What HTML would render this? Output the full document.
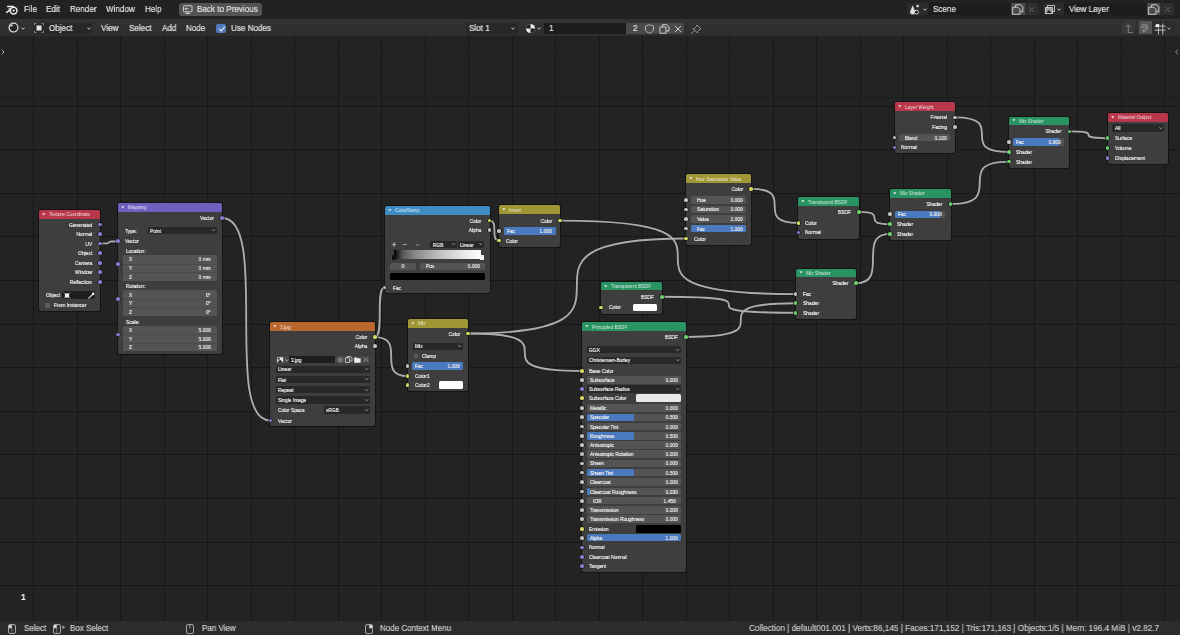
<!DOCTYPE html>
<html><head><meta charset="utf-8"><style>
html,body{margin:0;padding:0;}
body{width:1180px;height:635px;overflow:hidden;position:relative;background:#232323;font-family:"Liberation Sans", sans-serif;}
.t{position:absolute;white-space:nowrap;line-height:8px;height:8px;will-change:transform;-webkit-text-stroke:0.2px currentColor;}
.r{position:absolute;}
.s{position:absolute;border-radius:50%;box-shadow:0 0 0 0.6px #111;}
svg{overflow:visible}
</style></head><body>
<svg class="r" style="left:0;top:0" width="1180" height="635"><rect x="33" y="0" width="1" height="635" fill="#171717"/><rect x="77" y="0" width="1" height="635" fill="#171717"/><rect x="120" y="0" width="1" height="635" fill="#171717"/><rect x="164" y="0" width="1" height="635" fill="#171717"/><rect x="207" y="0" width="1" height="635" fill="#171717"/><rect x="251" y="0" width="1" height="635" fill="#171717"/><rect x="294" y="0" width="1" height="635" fill="#171717"/><rect x="338" y="0" width="1" height="635" fill="#171717"/><rect x="381" y="0" width="1" height="635" fill="#171717"/><rect x="425" y="0" width="1" height="635" fill="#171717"/><rect x="468" y="0" width="1" height="635" fill="#171717"/><rect x="512" y="0" width="1" height="635" fill="#171717"/><rect x="555" y="0" width="1" height="635" fill="#171717"/><rect x="599" y="0" width="1" height="635" fill="#171717"/><rect x="642" y="0" width="1" height="635" fill="#171717"/><rect x="686" y="0" width="1" height="635" fill="#171717"/><rect x="729" y="0" width="1" height="635" fill="#171717"/><rect x="773" y="0" width="1" height="635" fill="#171717"/><rect x="816" y="0" width="1" height="635" fill="#171717"/><rect x="860" y="0" width="1" height="635" fill="#171717"/><rect x="903" y="0" width="1" height="635" fill="#171717"/><rect x="947" y="0" width="1" height="635" fill="#171717"/><rect x="990" y="0" width="1" height="635" fill="#171717"/><rect x="1034" y="0" width="1" height="635" fill="#171717"/><rect x="1077" y="0" width="1" height="635" fill="#171717"/><rect x="1121" y="0" width="1" height="635" fill="#171717"/><rect x="1164" y="0" width="1" height="635" fill="#171717"/><rect x="0" y="106" width="1180" height="1" fill="#171717"/><rect x="0" y="149" width="1180" height="1" fill="#171717"/><rect x="0" y="193" width="1180" height="1" fill="#171717"/><rect x="0" y="236" width="1180" height="1" fill="#171717"/><rect x="0" y="280" width="1180" height="1" fill="#171717"/><rect x="0" y="324" width="1180" height="1" fill="#171717"/><rect x="0" y="367" width="1180" height="1" fill="#171717"/><rect x="0" y="411" width="1180" height="1" fill="#171717"/><rect x="0" y="454" width="1180" height="1" fill="#171717"/><rect x="0" y="498" width="1180" height="1" fill="#171717"/><rect x="0" y="542" width="1180" height="1" fill="#171717"/><rect x="0" y="585" width="1180" height="1" fill="#171717"/><rect x="0" y="629" width="1180" height="1" fill="#171717"/><rect x="0" y="53" width="1180" height="1" fill="#1e1e1e"/><rect x="0" y="97" width="1180" height="1" fill="#1c1c1c"/></svg>
<svg class="r" style="left:0;top:0" width="1180" height="635"><path d="M100.00 243.50 C118.00 243.50 100.00 241.20 118.00 241.20" stroke="#151515" stroke-width="2.8" fill="none" stroke-opacity="0.7"/><path d="M222.00 218.00 C270.40 218.00 222.00 420.50 270.40 420.50" stroke="#151515" stroke-width="2.8" fill="none" stroke-opacity="0.7"/><path d="M374.90 337.10 C384.60 337.10 374.90 287.50 384.60 287.50" stroke="#151515" stroke-width="2.8" fill="none" stroke-opacity="0.7"/><path d="M374.90 337.10 C407.50 337.10 374.90 376.00 407.50 376.00" stroke="#151515" stroke-width="2.8" fill="none" stroke-opacity="0.7"/><path d="M489.60 220.60 C499.20 220.60 489.60 240.60 499.20 240.60" stroke="#151515" stroke-width="2.8" fill="none" stroke-opacity="0.7"/><path d="M560.00 220.60 C795.60 220.60 560.00 294.10 795.60 294.10" stroke="#151515" stroke-width="2.8" fill="none" stroke-opacity="0.7"/><path d="M467.80 333.50 C685.90 333.50 467.80 238.50 685.90 238.50" stroke="#151515" stroke-width="2.8" fill="none" stroke-opacity="0.7"/><path d="M467.80 333.50 C581.80 333.50 467.80 371.00 581.80 371.00" stroke="#151515" stroke-width="2.8" fill="none" stroke-opacity="0.7"/><path d="M751.00 188.90 C798.40 188.90 751.00 223.00 798.40 223.00" stroke="#151515" stroke-width="2.8" fill="none" stroke-opacity="0.7"/><path d="M858.90 211.90 C890.00 211.90 858.90 224.20 890.00 224.20" stroke="#151515" stroke-width="2.8" fill="none" stroke-opacity="0.7"/><path d="M856.00 283.20 C890.00 283.20 856.00 233.90 890.00 233.90" stroke="#151515" stroke-width="2.8" fill="none" stroke-opacity="0.7"/><path d="M950.60 203.90 C1008.90 203.90 950.60 161.60 1008.90 161.60" stroke="#151515" stroke-width="2.8" fill="none" stroke-opacity="0.7"/><path d="M955.00 117.40 C1008.90 117.40 955.00 152.00 1008.90 152.00" stroke="#151515" stroke-width="2.8" fill="none" stroke-opacity="0.7"/><path d="M1069.40 131.40 C1107.60 131.40 1069.40 138.20 1107.60 138.20" stroke="#151515" stroke-width="2.8" fill="none" stroke-opacity="0.7"/><path d="M662.00 296.80 C795.60 296.80 662.00 312.80 795.60 312.80" stroke="#151515" stroke-width="2.8" fill="none" stroke-opacity="0.7"/><path d="M686.00 337.00 C795.60 337.00 686.00 303.30 795.60 303.30" stroke="#151515" stroke-width="2.8" fill="none" stroke-opacity="0.7"/><path d="M100.00 243.50 C118.00 243.50 100.00 241.20 118.00 241.20" stroke="#acacac" stroke-width="1.9" fill="none"/><path d="M222.00 218.00 C270.40 218.00 222.00 420.50 270.40 420.50" stroke="#acacac" stroke-width="1.9" fill="none"/><path d="M374.90 337.10 C384.60 337.10 374.90 287.50 384.60 287.50" stroke="#acacac" stroke-width="1.9" fill="none"/><path d="M374.90 337.10 C407.50 337.10 374.90 376.00 407.50 376.00" stroke="#acacac" stroke-width="1.9" fill="none"/><path d="M489.60 220.60 C499.20 220.60 489.60 240.60 499.20 240.60" stroke="#acacac" stroke-width="1.9" fill="none"/><path d="M560.00 220.60 C795.60 220.60 560.00 294.10 795.60 294.10" stroke="#acacac" stroke-width="1.9" fill="none"/><path d="M467.80 333.50 C685.90 333.50 467.80 238.50 685.90 238.50" stroke="#acacac" stroke-width="1.9" fill="none"/><path d="M467.80 333.50 C581.80 333.50 467.80 371.00 581.80 371.00" stroke="#acacac" stroke-width="1.9" fill="none"/><path d="M751.00 188.90 C798.40 188.90 751.00 223.00 798.40 223.00" stroke="#acacac" stroke-width="1.9" fill="none"/><path d="M858.90 211.90 C890.00 211.90 858.90 224.20 890.00 224.20" stroke="#acacac" stroke-width="1.9" fill="none"/><path d="M856.00 283.20 C890.00 283.20 856.00 233.90 890.00 233.90" stroke="#acacac" stroke-width="1.9" fill="none"/><path d="M950.60 203.90 C1008.90 203.90 950.60 161.60 1008.90 161.60" stroke="#acacac" stroke-width="1.9" fill="none"/><path d="M955.00 117.40 C1008.90 117.40 955.00 152.00 1008.90 152.00" stroke="#acacac" stroke-width="1.9" fill="none"/><path d="M1069.40 131.40 C1107.60 131.40 1069.40 138.20 1107.60 138.20" stroke="#acacac" stroke-width="1.9" fill="none"/><path d="M662.00 296.80 C795.60 296.80 662.00 312.80 795.60 312.80" stroke="#acacac" stroke-width="1.9" fill="none"/><path d="M686.00 337.00 C795.60 337.00 686.00 303.30 795.60 303.30" stroke="#acacac" stroke-width="1.9" fill="none"/></svg>
<div class="r" style="left:38.00px;top:208.50px;width:63.00px;height:103.50px;background:#141414;border-radius:2.8px;opacity:0.95"></div><div class="r" style="left:39.00px;top:209.50px;width:61.00px;height:101.50px;background:#3e3e3e;border-radius:2px;"></div><div class="r" style="left:39.00px;top:209.50px;width:61.00px;height:9.00px;background:#b9374b;border-radius:2px;border-bottom-left-radius:0;border-bottom-right-radius:0"></div><svg class="r" style="left:42.00px;top:212.50px" width="4" height="3"><path d="M0.3 0.3 L3.3 0.3 L1.8 2.6Z" fill="#e8e8e8"/></svg><div class="t" style="left:49.00px;top:210.00px;font-size:5.90px;color:rgba(255,255,255,0.82);transform:scaleX(0.8220);transform-origin:0 50%;-webkit-text-stroke:0;">Texture Coordinate</div><div class="t" style="right:1087.80px;top:220.60px;font-size:6.02px;color:#eeeeee;text-align:right;transform:scaleX(0.8220);transform-origin:100% 50%;">Generated</div><div class="s" style="left:98.15px;top:222.75px;width:3.70px;height:3.70px;background:#857ed0;"></div><div class="t" style="right:1087.80px;top:230.00px;font-size:6.02px;color:#eeeeee;text-align:right;transform:scaleX(0.8220);transform-origin:100% 50%;">Normal</div><div class="s" style="left:98.15px;top:232.15px;width:3.70px;height:3.70px;background:#857ed0;"></div><div class="t" style="right:1087.80px;top:239.50px;font-size:6.02px;color:#eeeeee;text-align:right;transform:scaleX(0.8220);transform-origin:100% 50%;">UV</div><div class="s" style="left:98.15px;top:241.65px;width:3.70px;height:3.70px;background:#857ed0;"></div><div class="t" style="right:1087.80px;top:249.30px;font-size:6.02px;color:#eeeeee;text-align:right;transform:scaleX(0.8220);transform-origin:100% 50%;">Object</div><div class="s" style="left:98.15px;top:251.45px;width:3.70px;height:3.70px;background:#857ed0;"></div><div class="t" style="right:1087.80px;top:258.80px;font-size:6.02px;color:#eeeeee;text-align:right;transform:scaleX(0.8220);transform-origin:100% 50%;">Camera</div><div class="s" style="left:98.15px;top:260.95px;width:3.70px;height:3.70px;background:#857ed0;"></div><div class="t" style="right:1087.80px;top:268.20px;font-size:6.02px;color:#eeeeee;text-align:right;transform:scaleX(0.8220);transform-origin:100% 50%;">Window</div><div class="s" style="left:98.15px;top:270.35px;width:3.70px;height:3.70px;background:#857ed0;"></div><div class="t" style="right:1087.80px;top:277.90px;font-size:6.02px;color:#eeeeee;text-align:right;transform:scaleX(0.8220);transform-origin:100% 50%;">Reflection</div><div class="s" style="left:98.15px;top:280.05px;width:3.70px;height:3.70px;background:#857ed0;"></div><div class="t" style="left:46.00px;top:290.60px;font-size:5.90px;color:#eeeeee;transform:scaleX(0.8220);transform-origin:0 50%;">Object</div><div class="r" style="left:62.00px;top:291.00px;width:32.70px;height:7.60px;background:#1e1e1e;border-radius:2px;"></div><svg class="r" style="left:62.5px;top:291.5px" width="8" height="7" viewBox="0 0 8 7"><rect x="1.9" y="1.4" width="4.2" height="4.2" fill="#f2f2f2"/><path d="M0.6 0.6 L1.9 1.6 M7.4 0.6 L6.1 1.6 M0.6 6.4 L1.9 5.4 M7.4 6.4 L6.1 5.4" stroke="#bdbdbd" stroke-width="0.6"/></svg><svg class="r" style="left:87.8px;top:291.6px" width="7" height="7" viewBox="0 0 7 7"><path d="M0.8 6.2 L4.2 2.8" stroke="#e6e6e6" stroke-width="1.1" stroke-linecap="round"/><circle cx="5.1" cy="1.9" r="1.3" fill="#f0f0f0"/></svg><div class="r" style="left:45.00px;top:303.00px;width:5.20px;height:4.80px;background:#5f5f5f;border-radius:0.8px;"></div><div class="t" style="left:53.70px;top:301.30px;font-size:5.90px;color:#eeeeee;transform:scaleX(0.8220);transform-origin:0 50%;">From Instancer</div><div class="r" style="left:117.00px;top:202.00px;width:106.00px;height:153.00px;background:#141414;border-radius:2.8px;opacity:0.95"></div><div class="r" style="left:118.00px;top:203.00px;width:104.00px;height:151.00px;background:#3e3e3e;border-radius:2px;"></div><div class="r" style="left:118.00px;top:203.00px;width:104.00px;height:8.60px;background:#6f60c0;border-radius:2px;border-bottom-left-radius:0;border-bottom-right-radius:0"></div><svg class="r" style="left:121.00px;top:205.80px" width="4" height="3"><path d="M0.3 0.3 L3.3 0.3 L1.8 2.6Z" fill="#e8e8e8"/></svg><div class="t" style="left:128.00px;top:203.30px;font-size:5.90px;color:rgba(255,255,255,0.82);transform:scaleX(0.8220);transform-origin:0 50%;-webkit-text-stroke:0;">Mapping</div><div class="t" style="right:965.80px;top:214.00px;font-size:6.02px;color:#eeeeee;text-align:right;transform:scaleX(0.8220);transform-origin:100% 50%;">Vector</div><div class="s" style="left:220.15px;top:216.15px;width:3.70px;height:3.70px;background:#857ed0;"></div><div class="t" style="left:125.00px;top:226.60px;font-size:5.90px;color:#eeeeee;transform:scaleX(0.8220);transform-origin:0 50%;">Type:</div><div class="r" style="left:148.00px;top:226.90px;width:68.60px;height:7.40px;background:#282828;border-radius:1.5px;"></div><div class="t" style="left:150.30px;top:226.60px;font-size:5.90px;color:#eeeeee;transform:scaleX(0.8220);transform-origin:0 50%;">Point</div><svg class="r" style="left:211.60px;top:229.40px" width="3.4" height="2.4"><path d="M0.4 0.4 L1.7 1.8 L3 0.4" stroke="#d0d0d0" stroke-width="0.7" fill="none"/></svg><div class="t" style="left:125.00px;top:237.20px;font-size:6.02px;color:#eeeeee;transform:scaleX(0.8220);transform-origin:0 50%;">Vector</div><div class="s" style="left:116.15px;top:239.35px;width:3.70px;height:3.70px;background:#857ed0;"></div><div class="t" style="left:125.50px;top:246.60px;font-size:5.90px;color:#eeeeee;transform:scaleX(0.8220);transform-origin:0 50%;">Location:</div><div class="r" style="left:123.00px;top:255.10px;width:94.00px;height:26.20px;background:#545454;border-radius:1.5px;"></div><div class="t" style="left:129.00px;top:255.40px;font-size:5.90px;color:#eeeeee;transform:scaleX(0.8220);transform-origin:0 50%;">X</div><div class="t" style="right:969.20px;top:255.40px;font-size:5.90px;color:#eeeeee;text-align:right;transform:scaleX(0.8220);transform-origin:100% 50%;">0 mm</div><div class="t" style="left:129.00px;top:264.20px;font-size:5.90px;color:#eeeeee;transform:scaleX(0.8220);transform-origin:0 50%;">Y</div><div class="t" style="right:969.20px;top:264.20px;font-size:5.90px;color:#eeeeee;text-align:right;transform:scaleX(0.8220);transform-origin:100% 50%;">0 mm</div><div class="t" style="left:129.00px;top:273.00px;font-size:5.90px;color:#eeeeee;transform:scaleX(0.8220);transform-origin:0 50%;">Z</div><div class="t" style="right:969.20px;top:273.00px;font-size:5.90px;color:#eeeeee;text-align:right;transform:scaleX(0.8220);transform-origin:100% 50%;">0 mm</div><div class="r" style="left:123.00px;top:263.60px;width:94.00px;height:0.50px;background:#4a4a4a;border-radius:0px;"></div><div class="r" style="left:123.00px;top:272.40px;width:94.00px;height:0.50px;background:#4a4a4a;border-radius:0px;"></div><div class="s" style="left:116.15px;top:261.95px;width:3.70px;height:3.70px;background:#857ed0;"></div><div class="t" style="left:125.50px;top:282.40px;font-size:5.90px;color:#eeeeee;transform:scaleX(0.8220);transform-origin:0 50%;">Rotation:</div><div class="r" style="left:123.00px;top:290.40px;width:94.00px;height:25.80px;background:#545454;border-radius:1.5px;"></div><div class="t" style="left:129.00px;top:290.70px;font-size:5.90px;color:#eeeeee;transform:scaleX(0.8220);transform-origin:0 50%;">X</div><div class="t" style="right:969.20px;top:290.70px;font-size:5.90px;color:#eeeeee;text-align:right;transform:scaleX(0.8220);transform-origin:100% 50%;">0°</div><div class="t" style="left:129.00px;top:299.00px;font-size:5.90px;color:#eeeeee;transform:scaleX(0.8220);transform-origin:0 50%;">Y</div><div class="t" style="right:969.20px;top:299.00px;font-size:5.90px;color:#eeeeee;text-align:right;transform:scaleX(0.8220);transform-origin:100% 50%;">0°</div><div class="t" style="left:129.00px;top:307.90px;font-size:5.90px;color:#eeeeee;transform:scaleX(0.8220);transform-origin:0 50%;">Z</div><div class="t" style="right:969.20px;top:307.90px;font-size:5.90px;color:#eeeeee;text-align:right;transform:scaleX(0.8220);transform-origin:100% 50%;">0°</div><div class="r" style="left:123.00px;top:298.90px;width:94.00px;height:0.50px;background:#4a4a4a;border-radius:0px;"></div><div class="r" style="left:123.00px;top:307.20px;width:94.00px;height:0.50px;background:#4a4a4a;border-radius:0px;"></div><div class="s" style="left:116.15px;top:297.25px;width:3.70px;height:3.70px;background:#857ed0;"></div><div class="t" style="left:125.50px;top:317.50px;font-size:5.90px;color:#eeeeee;transform:scaleX(0.8220);transform-origin:0 50%;">Scale:</div><div class="r" style="left:123.00px;top:325.70px;width:94.00px;height:25.60px;background:#545454;border-radius:1.5px;"></div><div class="t" style="left:129.00px;top:326.00px;font-size:5.90px;color:#eeeeee;transform:scaleX(0.8220);transform-origin:0 50%;">X</div><div class="t" style="right:969.20px;top:326.00px;font-size:5.90px;color:#eeeeee;text-align:right;transform:scaleX(0.8220);transform-origin:100% 50%;">5.000</div><div class="t" style="left:129.00px;top:334.50px;font-size:5.90px;color:#eeeeee;transform:scaleX(0.8220);transform-origin:0 50%;">Y</div><div class="t" style="right:969.20px;top:334.50px;font-size:5.90px;color:#eeeeee;text-align:right;transform:scaleX(0.8220);transform-origin:100% 50%;">5.000</div><div class="t" style="left:129.00px;top:343.00px;font-size:5.90px;color:#eeeeee;transform:scaleX(0.8220);transform-origin:0 50%;">Z</div><div class="t" style="right:969.20px;top:343.00px;font-size:5.90px;color:#eeeeee;text-align:right;transform:scaleX(0.8220);transform-origin:100% 50%;">5.000</div><div class="r" style="left:123.00px;top:334.20px;width:94.00px;height:0.50px;background:#4a4a4a;border-radius:0px;"></div><div class="r" style="left:123.00px;top:342.70px;width:94.00px;height:0.50px;background:#4a4a4a;border-radius:0px;"></div><div class="s" style="left:116.15px;top:332.55px;width:3.70px;height:3.70px;background:#857ed0;"></div><div class="r" style="left:383.60px;top:204.80px;width:107.00px;height:89.00px;background:#141414;border-radius:2.8px;opacity:0.95"></div><div class="r" style="left:384.60px;top:205.80px;width:105.00px;height:87.00px;background:#3e3e3e;border-radius:2px;"></div><div class="r" style="left:384.60px;top:205.80px;width:105.00px;height:9.00px;background:#3f8cc3;border-radius:2px;border-bottom-left-radius:0;border-bottom-right-radius:0"></div><svg class="r" style="left:387.60px;top:208.80px" width="4" height="3"><path d="M0.3 0.3 L3.3 0.3 L1.8 2.6Z" fill="#e8e8e8"/></svg><div class="t" style="left:394.60px;top:206.30px;font-size:5.90px;color:rgba(255,255,255,0.82);transform:scaleX(0.8220);transform-origin:0 50%;-webkit-text-stroke:0;">ColorRamp</div><div class="t" style="right:698.20px;top:216.60px;font-size:6.02px;color:#eeeeee;text-align:right;transform:scaleX(0.8220);transform-origin:100% 50%;">Color</div><div class="s" style="left:487.75px;top:218.75px;width:3.70px;height:3.70px;background:#d6da62;"></div><div class="t" style="right:698.20px;top:226.30px;font-size:6.02px;color:#eeeeee;text-align:right;transform:scaleX(0.8220);transform-origin:100% 50%;">Alpha</div><div class="s" style="left:487.75px;top:228.45px;width:3.70px;height:3.70px;background:#c0c0c0;"></div><div class="t" style="left:344.00px;width:100px;top:240.60px;font-size:8.85px;color:#cfcfcf;text-align:center;transform:scaleX(0.8220);transform-origin:50% 50%;">+</div><div class="t" style="left:355.30px;width:100px;top:240.60px;font-size:8.26px;color:#cfcfcf;text-align:center;transform:scaleX(0.8220);transform-origin:50% 50%;">&#8722;</div><svg class="r" style="left:416.3px;top:243.6px" width="3.4" height="2.4"><path d="M0.4 0.4 L1.7 1.8 L3 0.4" stroke="#d0d0d0" stroke-width="0.7" fill="none"/></svg><div class="r" style="left:430.20px;top:241.30px;width:26.80px;height:6.40px;background:#282828;border-radius:1.5px;"></div><div class="t" style="left:432.50px;top:240.50px;font-size:5.90px;color:#eeeeee;transform:scaleX(0.8220);transform-origin:0 50%;">RGB</div><svg class="r" style="left:452.00px;top:243.30px" width="3.4" height="2.4"><path d="M0.4 0.4 L1.7 1.8 L3 0.4" stroke="#d0d0d0" stroke-width="0.7" fill="none"/></svg><div class="r" style="left:458.00px;top:241.30px;width:26.30px;height:6.40px;background:#282828;border-radius:1.5px;"></div><div class="t" style="left:460.30px;top:240.50px;font-size:5.90px;color:#eeeeee;transform:scaleX(0.8220);transform-origin:0 50%;">Linear</div><svg class="r" style="left:479.30px;top:243.30px" width="3.4" height="2.4"><path d="M0.4 0.4 L1.7 1.8 L3 0.4" stroke="#d0d0d0" stroke-width="0.7" fill="none"/></svg><div class="r" style="left:393.60px;top:249.60px;width:87.80px;height:9.30px;background:linear-gradient(to right,#000 0%,#595959 10%,#898989 25%,#bcbcbc 50%,#e1e1e1 75%,#fff 100%);border-radius:0px;"></div><div class="r" style="left:391.50px;top:254.50px;width:4.00px;height:5.00px;background:#111;border-radius:0.5px;"></div><div class="r" style="left:479.50px;top:254.50px;width:4.00px;height:5.00px;background:#f4f4f4;border-radius:0.5px;"></div><div class="r" style="left:390.20px;top:262.80px;width:26.30px;height:6.80px;background:#545454;border-radius:1.5px;"></div><div class="t" style="left:353.35px;width:100px;top:262.20px;font-size:5.90px;color:#eeeeee;text-align:center;transform:scaleX(0.8220);transform-origin:50% 50%;">0</div><div class="r" style="left:420.00px;top:262.80px;width:64.80px;height:6.80px;background:#545454;border-radius:1.5px;"></div><div class="t" style="left:426.00px;top:262.20px;font-size:5.90px;color:#eeeeee;transform:scaleX(0.8220);transform-origin:0 50%;">Pos</div><div class="t" style="right:700.70px;top:262.20px;font-size:5.90px;color:#eeeeee;text-align:right;transform:scaleX(0.8220);transform-origin:100% 50%;">0.000</div><div class="r" style="left:390.20px;top:273.00px;width:94.60px;height:7.00px;background:#000000;border-radius:1.5px;"></div><div class="t" style="left:392.70px;top:283.50px;font-size:6.02px;color:#eeeeee;transform:scaleX(0.8220);transform-origin:0 50%;">Fac</div><div class="s" style="left:382.75px;top:285.65px;width:3.70px;height:3.70px;background:#c0c0c0;"></div><div class="r" style="left:498.20px;top:204.20px;width:62.80px;height:43.80px;background:#141414;border-radius:2.8px;opacity:0.95"></div><div class="r" style="left:499.20px;top:205.20px;width:60.80px;height:41.80px;background:#3e3e3e;border-radius:2px;"></div><div class="r" style="left:499.20px;top:205.20px;width:60.80px;height:9.00px;background:#9f9636;border-radius:2px;border-bottom-left-radius:0;border-bottom-right-radius:0"></div><svg class="r" style="left:502.20px;top:208.20px" width="4" height="3"><path d="M0.3 0.3 L3.3 0.3 L1.8 2.6Z" fill="#e8e8e8"/></svg><div class="t" style="left:509.20px;top:205.70px;font-size:5.90px;color:rgba(255,255,255,0.82);transform:scaleX(0.8220);transform-origin:0 50%;-webkit-text-stroke:0;">Invert</div><div class="t" style="right:627.80px;top:216.60px;font-size:6.02px;color:#eeeeee;text-align:right;transform:scaleX(0.8220);transform-origin:100% 50%;">Color</div><div class="s" style="left:558.15px;top:218.75px;width:3.70px;height:3.70px;background:#d6da62;"></div><div class="s" style="left:497.35px;top:229.05px;width:3.70px;height:3.70px;background:#c0c0c0;"></div><div class="r" style="left:504.00px;top:227.10px;width:51.50px;height:7.60px;background:#545454;border-radius:1.5px;"></div><div class="r" style="left:504.00px;top:227.10px;width:51.50px;height:7.60px;background:#4a79bd;border-radius:1.5px;"></div><div class="t" style="left:506.90px;top:226.90px;font-size:5.90px;color:#eeeeee;transform:scaleX(0.8220);transform-origin:0 50%;">Fac</div><div class="t" style="right:628.00px;top:226.90px;font-size:5.90px;color:#eeeeee;text-align:right;transform:scaleX(0.8220);transform-origin:100% 50%;">1.000</div><div class="t" style="left:506.00px;top:236.60px;font-size:6.02px;color:#eeeeee;transform:scaleX(0.8220);transform-origin:0 50%;">Color</div><div class="s" style="left:497.35px;top:238.75px;width:3.70px;height:3.70px;background:#d6da62;"></div><div class="r" style="left:269.40px;top:321.20px;width:106.50px;height:106.10px;background:#141414;border-radius:2.8px;opacity:0.95"></div><div class="r" style="left:270.40px;top:322.20px;width:104.50px;height:104.10px;background:#3e3e3e;border-radius:2px;"></div><div class="r" style="left:270.40px;top:322.20px;width:104.50px;height:9.10px;background:#b8672f;border-radius:2px;border-bottom-left-radius:0;border-bottom-right-radius:0"></div><svg class="r" style="left:273.40px;top:325.25px" width="4" height="3"><path d="M0.3 0.3 L3.3 0.3 L1.8 2.6Z" fill="#e8e8e8"/></svg><div class="t" style="left:280.40px;top:322.75px;font-size:5.90px;color:rgba(255,255,255,0.82);transform:scaleX(0.8220);transform-origin:0 50%;-webkit-text-stroke:0;">3.jpg</div><div class="t" style="right:812.90px;top:333.10px;font-size:6.02px;color:#eeeeee;text-align:right;transform:scaleX(0.8220);transform-origin:100% 50%;">Color</div><div class="s" style="left:373.05px;top:335.25px;width:3.70px;height:3.70px;background:#d6da62;"></div><div class="t" style="right:812.90px;top:342.30px;font-size:6.02px;color:#eeeeee;text-align:right;transform:scaleX(0.8220);transform-origin:100% 50%;">Alpha</div><div class="s" style="left:373.05px;top:344.45px;width:3.70px;height:3.70px;background:#c0c0c0;"></div><div class="r" style="left:276.30px;top:355.80px;width:12.70px;height:7.40px;background:#4a4a4a;border-radius:1.2px;border-top-right-radius:0;border-bottom-right-radius:0"></div><svg class="r" style="left:277.2px;top:356.6px" width="7" height="6" viewBox="0 0 7 6"><rect x="0.3" y="0.3" width="5.8" height="5.4" fill="#e6e6e6"/><path d="M0.3 5.7 L3 2.5 L6.1 5.7Z" fill="#222"/><rect x="0.9" y="0.9" width="1.8" height="1.6" fill="#222"/></svg><svg class="r" style="left:284.6px;top:358.6px" width="4" height="3"><path d="M0.4 0.5 L1.8 1.9 L3.2 0.5" stroke="#cfcfcf" stroke-width="0.7" fill="none"/></svg><div class="r" style="left:289.00px;top:355.80px;width:46.20px;height:7.40px;background:#1e1e1e;border-radius:0px;"></div><div class="t" style="left:291.40px;top:355.50px;font-size:5.90px;color:#eeeeee;transform:scaleX(0.8220);transform-origin:0 50%;">3.jpg</div><div class="r" style="left:335.20px;top:355.80px;width:34.60px;height:7.40px;background:#474747;border-radius:1.2px;border-top-left-radius:0;border-bottom-left-radius:0"></div><svg class="r" style="left:336.5px;top:356.5px" width="7" height="6" viewBox="0 0 7 6"><circle cx="3.3" cy="3" r="2.2" fill="none" stroke="#8a8a8a" stroke-width="0.9"/><path d="M3.3 0 L3.3 6 M0.3 3 L6.3 3 M1.2 0.9 L5.4 5.1 M5.4 0.9 L1.2 5.1" stroke="#8a8a8a" stroke-width="0.6"/></svg><svg class="r" style="left:345px;top:356.3px" width="8" height="7" viewBox="0 0 8 7"><path d="M0.5 1.8 L0.5 6.5 L4.5 6.5 L4.5 1.8 Z M2.2 1.8 L2.2 0.5 L5.5 0.5 L7 2 L7 5 L4.5 5" fill="none" stroke="#d6d6d6" stroke-width="0.8"/></svg><svg class="r" style="left:353.8px;top:356.6px" width="7" height="6" viewBox="0 0 7 6"><path d="M0.2 0.6 L2.6 0.6 L3.2 1.3 L6.6 1.3 L6.6 5.8 L0.2 5.8 Z" fill="#efefef"/></svg><svg class="r" style="left:363.3px;top:357.2px" width="6" height="5" viewBox="0 0 6 5"><path d="M0.6 0.4 L5.2 4.6 M5.2 0.4 L0.6 4.6" stroke="#9a9a9a" stroke-width="0.8"/></svg><div class="r" style="left:275.90px;top:365.60px;width:94.10px;height:7.40px;background:#282828;border-radius:1.5px;"></div><div class="t" style="left:278.20px;top:365.30px;font-size:5.90px;color:#eeeeee;transform:scaleX(0.8220);transform-origin:0 50%;">Linear</div><svg class="r" style="left:365.00px;top:368.10px" width="3.4" height="2.4"><path d="M0.4 0.4 L1.7 1.8 L3 0.4" stroke="#d0d0d0" stroke-width="0.7" fill="none"/></svg><div class="r" style="left:275.90px;top:375.90px;width:94.10px;height:7.40px;background:#282828;border-radius:1.5px;"></div><div class="t" style="left:278.20px;top:375.60px;font-size:5.90px;color:#eeeeee;transform:scaleX(0.8220);transform-origin:0 50%;">Flat</div><svg class="r" style="left:365.00px;top:378.40px" width="3.4" height="2.4"><path d="M0.4 0.4 L1.7 1.8 L3 0.4" stroke="#d0d0d0" stroke-width="0.7" fill="none"/></svg><div class="r" style="left:275.90px;top:386.10px;width:94.10px;height:7.40px;background:#282828;border-radius:1.5px;"></div><div class="t" style="left:278.20px;top:385.80px;font-size:5.90px;color:#eeeeee;transform:scaleX(0.8220);transform-origin:0 50%;">Repeat</div><svg class="r" style="left:365.00px;top:388.60px" width="3.4" height="2.4"><path d="M0.4 0.4 L1.7 1.8 L3 0.4" stroke="#d0d0d0" stroke-width="0.7" fill="none"/></svg><div class="r" style="left:275.90px;top:396.30px;width:94.10px;height:7.40px;background:#282828;border-radius:1.5px;"></div><div class="t" style="left:278.20px;top:396.00px;font-size:5.90px;color:#eeeeee;transform:scaleX(0.8220);transform-origin:0 50%;">Single Image</div><svg class="r" style="left:365.00px;top:398.80px" width="3.4" height="2.4"><path d="M0.4 0.4 L1.7 1.8 L3 0.4" stroke="#d0d0d0" stroke-width="0.7" fill="none"/></svg><div class="t" style="left:277.50px;top:406.00px;font-size:5.90px;color:#eeeeee;transform:scaleX(0.8220);transform-origin:0 50%;">Color Space</div><div class="r" style="left:324.00px;top:406.30px;width:46.00px;height:7.40px;background:#282828;border-radius:1.5px;"></div><div class="t" style="left:326.30px;top:406.00px;font-size:5.90px;color:#eeeeee;transform:scaleX(0.8220);transform-origin:0 50%;">sRGB</div><svg class="r" style="left:365.00px;top:408.80px" width="3.4" height="2.4"><path d="M0.4 0.4 L1.7 1.8 L3 0.4" stroke="#d0d0d0" stroke-width="0.7" fill="none"/></svg><div class="t" style="left:278.00px;top:416.50px;font-size:6.02px;color:#eeeeee;transform:scaleX(0.8220);transform-origin:0 50%;">Vector</div><div class="s" style="left:268.55px;top:418.65px;width:3.70px;height:3.70px;background:#857ed0;"></div><div class="r" style="left:406.50px;top:318.00px;width:62.30px;height:74.00px;background:#141414;border-radius:2.8px;opacity:0.95"></div><div class="r" style="left:407.50px;top:319.00px;width:60.30px;height:72.00px;background:#3e3e3e;border-radius:2px;"></div><div class="r" style="left:407.50px;top:319.00px;width:60.30px;height:8.70px;background:#9f9636;border-radius:2px;border-bottom-left-radius:0;border-bottom-right-radius:0"></div><svg class="r" style="left:410.50px;top:321.85px" width="4" height="3"><path d="M0.3 0.3 L3.3 0.3 L1.8 2.6Z" fill="#e8e8e8"/></svg><div class="t" style="left:417.50px;top:319.35px;font-size:5.90px;color:rgba(255,255,255,0.82);transform:scaleX(0.8220);transform-origin:0 50%;-webkit-text-stroke:0;">Mix</div><div class="t" style="right:720.00px;top:329.50px;font-size:6.02px;color:#eeeeee;text-align:right;transform:scaleX(0.8220);transform-origin:100% 50%;">Color</div><div class="s" style="left:465.95px;top:331.65px;width:3.70px;height:3.70px;background:#d6da62;"></div><div class="r" style="left:412.50px;top:342.60px;width:50.70px;height:7.40px;background:#282828;border-radius:1.5px;"></div><div class="t" style="left:414.80px;top:342.30px;font-size:5.90px;color:#eeeeee;transform:scaleX(0.8220);transform-origin:0 50%;">Mix</div><svg class="r" style="left:458.20px;top:345.10px" width="3.4" height="2.4"><path d="M0.4 0.4 L1.7 1.8 L3 0.4" stroke="#d0d0d0" stroke-width="0.7" fill="none"/></svg><div class="r" style="left:414.00px;top:353.70px;width:4.00px;height:4.00px;background:#5a5a5a;border-radius:0.8px;"></div><div class="t" style="left:422.00px;top:351.70px;font-size:5.90px;color:#eeeeee;transform:scaleX(0.8220);transform-origin:0 50%;">Clamp</div><div class="s" style="left:405.65px;top:364.35px;width:3.70px;height:3.70px;background:#c0c0c0;"></div><div class="r" style="left:412.00px;top:362.30px;width:51.00px;height:7.80px;background:#545454;border-radius:1.5px;"></div><div class="r" style="left:412.00px;top:362.30px;width:51.00px;height:7.80px;background:#4a79bd;border-radius:1.5px;"></div><div class="t" style="left:414.90px;top:362.20px;font-size:5.90px;color:#eeeeee;transform:scaleX(0.8220);transform-origin:0 50%;">Fac</div><div class="t" style="right:720.50px;top:362.20px;font-size:5.90px;color:#eeeeee;text-align:right;transform:scaleX(0.8220);transform-origin:100% 50%;">1.000</div><div class="t" style="left:415.00px;top:372.00px;font-size:6.02px;color:#eeeeee;transform:scaleX(0.8220);transform-origin:0 50%;">Color1</div><div class="s" style="left:405.65px;top:374.15px;width:3.70px;height:3.70px;background:#d6da62;"></div><div class="t" style="left:415.00px;top:381.00px;font-size:6.02px;color:#eeeeee;transform:scaleX(0.8220);transform-origin:0 50%;">Color2</div><div class="s" style="left:405.65px;top:383.15px;width:3.70px;height:3.70px;background:#d6da62;"></div><div class="r" style="left:438.80px;top:381.10px;width:24.20px;height:8.00px;background:#ffffff;border-radius:1.5px;"></div><div class="r" style="left:580.80px;top:321.40px;width:106.20px;height:251.60px;background:#141414;border-radius:2.8px;opacity:0.95"></div><div class="r" style="left:581.80px;top:322.40px;width:104.20px;height:249.60px;background:#3e3e3e;border-radius:2px;"></div><div class="r" style="left:581.80px;top:322.40px;width:104.20px;height:8.80px;background:#2a9363;border-radius:2px;border-bottom-left-radius:0;border-bottom-right-radius:0"></div><svg class="r" style="left:584.80px;top:325.30px" width="4" height="3"><path d="M0.3 0.3 L3.3 0.3 L1.8 2.6Z" fill="#e8e8e8"/></svg><div class="t" style="left:591.80px;top:322.80px;font-size:5.90px;color:rgba(255,255,255,0.82);transform:scaleX(0.8220);transform-origin:0 50%;-webkit-text-stroke:0;">Principled BSDF</div><div class="t" style="right:501.80px;top:333.00px;font-size:6.02px;color:#eeeeee;text-align:right;transform:scaleX(0.8220);transform-origin:100% 50%;">BSDF</div><div class="s" style="left:684.15px;top:335.15px;width:3.70px;height:3.70px;background:#6ccf6c;"></div><div class="r" style="left:586.70px;top:346.00px;width:94.30px;height:7.40px;background:#282828;border-radius:1.5px;"></div><div class="t" style="left:589.00px;top:345.70px;font-size:5.90px;color:#eeeeee;transform:scaleX(0.8220);transform-origin:0 50%;">GGX</div><svg class="r" style="left:676.00px;top:348.50px" width="3.4" height="2.4"><path d="M0.4 0.4 L1.7 1.8 L3 0.4" stroke="#d0d0d0" stroke-width="0.7" fill="none"/></svg><div class="r" style="left:586.70px;top:356.60px;width:94.30px;height:7.40px;background:#282828;border-radius:1.5px;"></div><div class="t" style="left:589.00px;top:356.30px;font-size:5.90px;color:#eeeeee;transform:scaleX(0.8220);transform-origin:0 50%;">Christensen-Burley</div><svg class="r" style="left:676.00px;top:359.10px" width="3.4" height="2.4"><path d="M0.4 0.4 L1.7 1.8 L3 0.4" stroke="#d0d0d0" stroke-width="0.7" fill="none"/></svg><div class="t" style="left:589.00px;top:367.00px;font-size:6.02px;color:#eeeeee;transform:scaleX(0.8220);transform-origin:0 50%;">Base Color</div><div class="s" style="left:579.95px;top:369.15px;width:3.70px;height:3.70px;background:#d6da62;"></div><div class="s" style="left:579.95px;top:378.05px;width:3.70px;height:3.70px;background:#c0c0c0;"></div><div class="r" style="left:586.70px;top:376.10px;width:94.30px;height:7.60px;background:#545454;border-radius:1.5px;"></div><div class="t" style="left:589.60px;top:375.90px;font-size:5.90px;color:#eeeeee;transform:scaleX(0.8220);transform-origin:0 50%;">Subsurface</div><div class="t" style="right:502.50px;top:375.90px;font-size:5.90px;color:#eeeeee;text-align:right;transform:scaleX(0.8220);transform-origin:100% 50%;">0.000</div><div class="s" style="left:579.95px;top:387.05px;width:3.70px;height:3.70px;background:#857ed0;"></div><div class="r" style="left:586.70px;top:385.20px;width:94.30px;height:7.40px;background:#282828;border-radius:1.5px;"></div><div class="t" style="left:589.00px;top:384.90px;font-size:5.90px;color:#eeeeee;transform:scaleX(0.8220);transform-origin:0 50%;">Subsurface Radius</div><svg class="r" style="left:676.00px;top:387.70px" width="3.4" height="2.4"><path d="M0.4 0.4 L1.7 1.8 L3 0.4" stroke="#d0d0d0" stroke-width="0.7" fill="none"/></svg><div class="s" style="left:579.95px;top:396.15px;width:3.70px;height:3.70px;background:#d6da62;"></div><div class="t" style="left:589.00px;top:394.00px;font-size:5.90px;color:#eeeeee;transform:scaleX(0.8220);transform-origin:0 50%;">Subsurface Color</div><div class="r" style="left:635.50px;top:394.10px;width:45.50px;height:7.80px;background:#e8e8e8;border-radius:1.5px;"></div><div class="s" style="left:579.95px;top:405.95px;width:3.70px;height:3.70px;background:#c0c0c0;"></div><div class="r" style="left:586.70px;top:404.00px;width:94.30px;height:7.60px;background:#545454;border-radius:1.5px;"></div><div class="t" style="left:589.60px;top:403.80px;font-size:5.90px;color:#eeeeee;transform:scaleX(0.8220);transform-origin:0 50%;">Metallic</div><div class="t" style="right:502.50px;top:403.80px;font-size:5.90px;color:#eeeeee;text-align:right;transform:scaleX(0.8220);transform-origin:100% 50%;">0.000</div><div class="s" style="left:579.95px;top:415.45px;width:3.70px;height:3.70px;background:#c0c0c0;"></div><div class="r" style="left:586.70px;top:413.50px;width:94.30px;height:7.60px;background:#545454;border-radius:1.5px;"></div><div class="r" style="left:586.70px;top:413.50px;width:47.15px;height:7.60px;background:#4a79bd;border-radius:1.5px;border-top-right-radius:0;border-bottom-right-radius:0"></div><div class="t" style="left:589.60px;top:413.30px;font-size:5.90px;color:#eeeeee;transform:scaleX(0.8220);transform-origin:0 50%;">Specular</div><div class="t" style="right:502.50px;top:413.30px;font-size:5.90px;color:#eeeeee;text-align:right;transform:scaleX(0.8220);transform-origin:100% 50%;">0.500</div><div class="s" style="left:579.95px;top:424.65px;width:3.70px;height:3.70px;background:#c0c0c0;"></div><div class="r" style="left:586.70px;top:422.70px;width:94.30px;height:7.60px;background:#545454;border-radius:1.5px;"></div><div class="t" style="left:589.60px;top:422.50px;font-size:5.90px;color:#eeeeee;transform:scaleX(0.8220);transform-origin:0 50%;">Specular Tint</div><div class="t" style="right:502.50px;top:422.50px;font-size:5.90px;color:#eeeeee;text-align:right;transform:scaleX(0.8220);transform-origin:100% 50%;">0.000</div><div class="s" style="left:579.95px;top:434.05px;width:3.70px;height:3.70px;background:#c0c0c0;"></div><div class="r" style="left:586.70px;top:432.10px;width:94.30px;height:7.60px;background:#545454;border-radius:1.5px;"></div><div class="r" style="left:586.70px;top:432.10px;width:47.15px;height:7.60px;background:#4a79bd;border-radius:1.5px;border-top-right-radius:0;border-bottom-right-radius:0"></div><div class="t" style="left:589.60px;top:431.90px;font-size:5.90px;color:#eeeeee;transform:scaleX(0.8220);transform-origin:0 50%;">Roughness</div><div class="t" style="right:502.50px;top:431.90px;font-size:5.90px;color:#eeeeee;text-align:right;transform:scaleX(0.8220);transform-origin:100% 50%;">0.500</div><div class="s" style="left:579.95px;top:443.15px;width:3.70px;height:3.70px;background:#c0c0c0;"></div><div class="r" style="left:586.70px;top:441.20px;width:94.30px;height:7.60px;background:#545454;border-radius:1.5px;"></div><div class="t" style="left:589.60px;top:441.00px;font-size:5.90px;color:#eeeeee;transform:scaleX(0.8220);transform-origin:0 50%;">Anisotropic</div><div class="t" style="right:502.50px;top:441.00px;font-size:5.90px;color:#eeeeee;text-align:right;transform:scaleX(0.8220);transform-origin:100% 50%;">0.000</div><div class="s" style="left:579.95px;top:452.25px;width:3.70px;height:3.70px;background:#c0c0c0;"></div><div class="r" style="left:586.70px;top:450.30px;width:94.30px;height:7.60px;background:#545454;border-radius:1.5px;"></div><div class="t" style="left:589.60px;top:450.10px;font-size:5.90px;color:#eeeeee;transform:scaleX(0.8220);transform-origin:0 50%;">Anisotropic Rotation</div><div class="t" style="right:502.50px;top:450.10px;font-size:5.90px;color:#eeeeee;text-align:right;transform:scaleX(0.8220);transform-origin:100% 50%;">0.000</div><div class="s" style="left:579.95px;top:461.55px;width:3.70px;height:3.70px;background:#c0c0c0;"></div><div class="r" style="left:586.70px;top:459.60px;width:94.30px;height:7.60px;background:#545454;border-radius:1.5px;"></div><div class="t" style="left:589.60px;top:459.40px;font-size:5.90px;color:#eeeeee;transform:scaleX(0.8220);transform-origin:0 50%;">Sheen</div><div class="t" style="right:502.50px;top:459.40px;font-size:5.90px;color:#eeeeee;text-align:right;transform:scaleX(0.8220);transform-origin:100% 50%;">0.000</div><div class="s" style="left:579.95px;top:470.75px;width:3.70px;height:3.70px;background:#c0c0c0;"></div><div class="r" style="left:586.70px;top:468.80px;width:94.30px;height:7.60px;background:#545454;border-radius:1.5px;"></div><div class="r" style="left:586.70px;top:468.80px;width:47.15px;height:7.60px;background:#4a79bd;border-radius:1.5px;border-top-right-radius:0;border-bottom-right-radius:0"></div><div class="t" style="left:589.60px;top:468.60px;font-size:5.90px;color:#eeeeee;transform:scaleX(0.8220);transform-origin:0 50%;">Sheen Tint</div><div class="t" style="right:502.50px;top:468.60px;font-size:5.90px;color:#eeeeee;text-align:right;transform:scaleX(0.8220);transform-origin:100% 50%;">0.500</div><div class="s" style="left:579.95px;top:480.25px;width:3.70px;height:3.70px;background:#c0c0c0;"></div><div class="r" style="left:586.70px;top:478.30px;width:94.30px;height:7.60px;background:#545454;border-radius:1.5px;"></div><div class="t" style="left:589.60px;top:478.10px;font-size:5.90px;color:#eeeeee;transform:scaleX(0.8220);transform-origin:0 50%;">Clearcoat</div><div class="t" style="right:502.50px;top:478.10px;font-size:5.90px;color:#eeeeee;text-align:right;transform:scaleX(0.8220);transform-origin:100% 50%;">0.000</div><div class="s" style="left:579.95px;top:489.75px;width:3.70px;height:3.70px;background:#c0c0c0;"></div><div class="r" style="left:586.70px;top:487.80px;width:94.30px;height:7.60px;background:#545454;border-radius:1.5px;"></div><div class="r" style="left:586.70px;top:487.80px;width:2.83px;height:7.60px;background:#4a79bd;border-radius:1.5px;border-top-right-radius:0;border-bottom-right-radius:0"></div><div class="t" style="left:589.60px;top:487.60px;font-size:5.90px;color:#eeeeee;transform:scaleX(0.8220);transform-origin:0 50%;">Clearcoat Roughness</div><div class="t" style="right:502.50px;top:487.60px;font-size:5.90px;color:#eeeeee;text-align:right;transform:scaleX(0.8220);transform-origin:100% 50%;">0.030</div><div class="s" style="left:579.95px;top:498.85px;width:3.70px;height:3.70px;background:#c0c0c0;"></div><div class="r" style="left:586.70px;top:496.90px;width:94.30px;height:7.60px;background:#545454;border-radius:1.5px;"></div><div class="t" style="left:593.00px;top:496.70px;font-size:5.90px;color:#eeeeee;transform:scaleX(0.8220);transform-origin:0 50%;">IOR</div><div class="t" style="right:504.00px;top:496.70px;font-size:5.90px;color:#eeeeee;text-align:right;transform:scaleX(0.8220);transform-origin:100% 50%;">1.450</div><div class="s" style="left:579.95px;top:508.05px;width:3.70px;height:3.70px;background:#c0c0c0;"></div><div class="r" style="left:586.70px;top:506.10px;width:94.30px;height:7.60px;background:#545454;border-radius:1.5px;"></div><div class="t" style="left:589.60px;top:505.90px;font-size:5.90px;color:#eeeeee;transform:scaleX(0.8220);transform-origin:0 50%;">Transmission</div><div class="t" style="right:502.50px;top:505.90px;font-size:5.90px;color:#eeeeee;text-align:right;transform:scaleX(0.8220);transform-origin:100% 50%;">0.000</div><div class="s" style="left:579.95px;top:517.35px;width:3.70px;height:3.70px;background:#c0c0c0;"></div><div class="r" style="left:586.70px;top:515.40px;width:94.30px;height:7.60px;background:#545454;border-radius:1.5px;"></div><div class="t" style="left:589.60px;top:515.20px;font-size:5.90px;color:#eeeeee;transform:scaleX(0.8220);transform-origin:0 50%;">Transmission Roughness</div><div class="t" style="right:502.50px;top:515.20px;font-size:5.90px;color:#eeeeee;text-align:right;transform:scaleX(0.8220);transform-origin:100% 50%;">0.000</div><div class="s" style="left:579.95px;top:526.85px;width:3.70px;height:3.70px;background:#d6da62;"></div><div class="t" style="left:589.00px;top:524.70px;font-size:5.90px;color:#eeeeee;transform:scaleX(0.8220);transform-origin:0 50%;">Emission</div><div class="r" style="left:635.70px;top:524.80px;width:45.30px;height:7.80px;background:#000000;border-radius:1.5px;"></div><div class="s" style="left:579.95px;top:535.85px;width:3.70px;height:3.70px;background:#c0c0c0;"></div><div class="r" style="left:586.70px;top:533.90px;width:94.30px;height:7.60px;background:#545454;border-radius:1.5px;"></div><div class="r" style="left:586.70px;top:533.90px;width:94.30px;height:7.60px;background:#4a79bd;border-radius:1.5px;"></div><div class="t" style="left:589.60px;top:533.70px;font-size:5.90px;color:#eeeeee;transform:scaleX(0.8220);transform-origin:0 50%;">Alpha</div><div class="t" style="right:502.50px;top:533.70px;font-size:5.90px;color:#eeeeee;text-align:right;transform:scaleX(0.8220);transform-origin:100% 50%;">1.000</div><div class="s" style="left:579.95px;top:545.55px;width:3.70px;height:3.70px;background:#857ed0;"></div><div class="t" style="left:589.00px;top:543.40px;font-size:5.90px;color:#eeeeee;transform:scaleX(0.8220);transform-origin:0 50%;">Normal</div><div class="s" style="left:579.95px;top:555.05px;width:3.70px;height:3.70px;background:#857ed0;"></div><div class="t" style="left:589.00px;top:552.90px;font-size:5.90px;color:#eeeeee;transform:scaleX(0.8220);transform-origin:0 50%;">Clearcoat Normal</div><div class="s" style="left:579.95px;top:564.35px;width:3.70px;height:3.70px;background:#857ed0;"></div><div class="t" style="left:589.00px;top:562.20px;font-size:5.90px;color:#eeeeee;transform:scaleX(0.8220);transform-origin:0 50%;">Tangent</div><div class="r" style="left:600.10px;top:281.20px;width:62.90px;height:33.80px;background:#141414;border-radius:2.8px;opacity:0.95"></div><div class="r" style="left:601.10px;top:282.20px;width:60.90px;height:31.80px;background:#3e3e3e;border-radius:2px;"></div><div class="r" style="left:601.10px;top:282.20px;width:60.90px;height:8.20px;background:#2a9363;border-radius:2px;border-bottom-left-radius:0;border-bottom-right-radius:0"></div><svg class="r" style="left:604.10px;top:284.80px" width="4" height="3"><path d="M0.3 0.3 L3.3 0.3 L1.8 2.6Z" fill="#e8e8e8"/></svg><div class="t" style="left:611.10px;top:282.30px;font-size:5.90px;color:rgba(255,255,255,0.82);transform:scaleX(0.8220);transform-origin:0 50%;-webkit-text-stroke:0;">Transparent BSDF</div><div class="t" style="right:525.80px;top:292.80px;font-size:6.02px;color:#eeeeee;text-align:right;transform:scaleX(0.8220);transform-origin:100% 50%;">BSDF</div><div class="s" style="left:660.15px;top:294.95px;width:3.70px;height:3.70px;background:#6ccf6c;"></div><div class="t" style="left:609.00px;top:303.40px;font-size:6.02px;color:#eeeeee;transform:scaleX(0.8220);transform-origin:0 50%;">Color</div><div class="s" style="left:599.25px;top:305.55px;width:3.70px;height:3.70px;background:#d6da62;"></div><div class="r" style="left:633.00px;top:303.70px;width:24.30px;height:7.80px;background:#ffffff;border-radius:1.5px;"></div><div class="r" style="left:684.90px;top:173.00px;width:67.10px;height:72.90px;background:#141414;border-radius:2.8px;opacity:0.95"></div><div class="r" style="left:685.90px;top:174.00px;width:65.10px;height:70.90px;background:#3e3e3e;border-radius:2px;"></div><div class="r" style="left:685.90px;top:174.00px;width:65.10px;height:9.00px;background:#9f9636;border-radius:2px;border-bottom-left-radius:0;border-bottom-right-radius:0"></div><svg class="r" style="left:688.90px;top:177.00px" width="4" height="3"><path d="M0.3 0.3 L3.3 0.3 L1.8 2.6Z" fill="#e8e8e8"/></svg><div class="t" style="left:695.90px;top:174.50px;font-size:5.90px;color:rgba(255,255,255,0.82);transform:scaleX(0.8220);transform-origin:0 50%;-webkit-text-stroke:0;">Hue Saturation Value</div><div class="t" style="right:436.80px;top:184.90px;font-size:6.02px;color:#eeeeee;text-align:right;transform:scaleX(0.8220);transform-origin:100% 50%;">Color</div><div class="s" style="left:749.15px;top:187.05px;width:3.70px;height:3.70px;background:#d6da62;"></div><div class="s" style="left:684.05px;top:198.15px;width:3.70px;height:3.70px;background:#c0c0c0;"></div><div class="r" style="left:690.80px;top:196.20px;width:55.50px;height:7.60px;background:#545454;border-radius:1.5px;"></div><div class="t" style="left:697.00px;top:196.00px;font-size:5.90px;color:#eeeeee;transform:scaleX(0.8220);transform-origin:0 50%;">Hue</div><div class="t" style="right:437.20px;top:196.00px;font-size:5.90px;color:#eeeeee;text-align:right;transform:scaleX(0.8220);transform-origin:100% 50%;">0.000</div><div class="s" style="left:684.05px;top:207.55px;width:3.70px;height:3.70px;background:#c0c0c0;"></div><div class="r" style="left:690.80px;top:205.60px;width:55.50px;height:7.60px;background:#545454;border-radius:1.5px;"></div><div class="t" style="left:697.00px;top:205.40px;font-size:5.90px;color:#eeeeee;transform:scaleX(0.8220);transform-origin:0 50%;">Saturation</div><div class="t" style="right:437.20px;top:205.40px;font-size:5.90px;color:#eeeeee;text-align:right;transform:scaleX(0.8220);transform-origin:100% 50%;">0.000</div><div class="s" style="left:684.05px;top:217.05px;width:3.70px;height:3.70px;background:#c0c0c0;"></div><div class="r" style="left:690.80px;top:215.10px;width:55.50px;height:7.60px;background:#545454;border-radius:1.5px;"></div><div class="t" style="left:697.00px;top:214.90px;font-size:5.90px;color:#eeeeee;transform:scaleX(0.8220);transform-origin:0 50%;">Value</div><div class="t" style="right:437.20px;top:214.90px;font-size:5.90px;color:#eeeeee;text-align:right;transform:scaleX(0.8220);transform-origin:100% 50%;">2.000</div><div class="s" style="left:684.05px;top:226.75px;width:3.70px;height:3.70px;background:#c0c0c0;"></div><div class="r" style="left:690.80px;top:224.80px;width:55.50px;height:7.60px;background:#545454;border-radius:1.5px;"></div><div class="r" style="left:690.80px;top:224.80px;width:55.50px;height:7.60px;background:#4a79bd;border-radius:1.5px;"></div><div class="t" style="left:697.00px;top:224.60px;font-size:5.90px;color:#eeeeee;transform:scaleX(0.8220);transform-origin:0 50%;">Fac</div><div class="t" style="right:437.20px;top:224.60px;font-size:5.90px;color:#eeeeee;text-align:right;transform:scaleX(0.8220);transform-origin:100% 50%;">1.000</div><div class="t" style="left:694.00px;top:234.50px;font-size:6.02px;color:#eeeeee;transform:scaleX(0.8220);transform-origin:0 50%;">Color</div><div class="s" style="left:684.05px;top:236.65px;width:3.70px;height:3.70px;background:#d6da62;"></div><div class="r" style="left:797.40px;top:196.00px;width:62.50px;height:43.60px;background:#141414;border-radius:2.8px;opacity:0.95"></div><div class="r" style="left:798.40px;top:197.00px;width:60.50px;height:41.60px;background:#3e3e3e;border-radius:2px;"></div><div class="r" style="left:798.40px;top:197.00px;width:60.50px;height:9.00px;background:#2a9363;border-radius:2px;border-bottom-left-radius:0;border-bottom-right-radius:0"></div><svg class="r" style="left:801.40px;top:200.00px" width="4" height="3"><path d="M0.3 0.3 L3.3 0.3 L1.8 2.6Z" fill="#e8e8e8"/></svg><div class="t" style="left:808.40px;top:197.50px;font-size:5.90px;color:rgba(255,255,255,0.82);transform:scaleX(0.8220);transform-origin:0 50%;-webkit-text-stroke:0;">Translucent BSDF</div><div class="t" style="right:328.90px;top:207.90px;font-size:6.02px;color:#eeeeee;text-align:right;transform:scaleX(0.8220);transform-origin:100% 50%;">BSDF</div><div class="s" style="left:857.05px;top:210.05px;width:3.70px;height:3.70px;background:#6ccf6c;"></div><div class="t" style="left:805.00px;top:219.00px;font-size:6.02px;color:#eeeeee;transform:scaleX(0.8220);transform-origin:0 50%;">Color</div><div class="s" style="left:796.55px;top:221.15px;width:3.70px;height:3.70px;background:#d6da62;"></div><div class="t" style="left:805.00px;top:228.40px;font-size:6.02px;color:#eeeeee;transform:scaleX(0.8220);transform-origin:0 50%;">Normal</div><div class="s" style="left:796.55px;top:230.55px;width:3.70px;height:3.70px;background:#857ed0;"></div><div class="r" style="left:889.00px;top:188.00px;width:62.60px;height:52.50px;background:#141414;border-radius:2.8px;opacity:0.95"></div><div class="r" style="left:890.00px;top:189.00px;width:60.60px;height:50.50px;background:#3e3e3e;border-radius:2px;"></div><div class="r" style="left:890.00px;top:189.00px;width:60.60px;height:8.50px;background:#2a9363;border-radius:2px;border-bottom-left-radius:0;border-bottom-right-radius:0"></div><svg class="r" style="left:893.00px;top:191.75px" width="4" height="3"><path d="M0.3 0.3 L3.3 0.3 L1.8 2.6Z" fill="#e8e8e8"/></svg><div class="t" style="left:900.00px;top:189.25px;font-size:5.90px;color:rgba(255,255,255,0.82);transform:scaleX(0.8220);transform-origin:0 50%;-webkit-text-stroke:0;">Mix Shader</div><div class="t" style="right:237.20px;top:199.90px;font-size:6.02px;color:#eeeeee;text-align:right;transform:scaleX(0.8220);transform-origin:100% 50%;">Shader</div><div class="s" style="left:948.75px;top:202.05px;width:3.70px;height:3.70px;background:#6ccf6c;"></div><div class="s" style="left:888.15px;top:212.45px;width:3.70px;height:3.70px;background:#c0c0c0;"></div><div class="r" style="left:894.60px;top:210.50px;width:50.80px;height:7.60px;background:#545454;border-radius:1.5px;"></div><div class="r" style="left:894.60px;top:210.50px;width:45.72px;height:7.60px;background:#4a79bd;border-radius:1.5px;border-top-right-radius:0;border-bottom-right-radius:0"></div><div class="t" style="left:897.50px;top:210.30px;font-size:5.90px;color:#eeeeee;transform:scaleX(0.8220);transform-origin:0 50%;">Fac</div><div class="t" style="right:238.10px;top:210.30px;font-size:5.90px;color:#eeeeee;text-align:right;transform:scaleX(0.8220);transform-origin:100% 50%;">0.900</div><div class="t" style="left:897.00px;top:220.20px;font-size:6.02px;color:#eeeeee;transform:scaleX(0.8220);transform-origin:0 50%;">Shader</div><div class="s" style="left:888.15px;top:222.35px;width:3.70px;height:3.70px;background:#6ccf6c;"></div><div class="t" style="left:897.00px;top:229.90px;font-size:6.02px;color:#eeeeee;transform:scaleX(0.8220);transform-origin:0 50%;">Shader</div><div class="s" style="left:888.15px;top:232.05px;width:3.70px;height:3.70px;background:#6ccf6c;"></div><div class="r" style="left:794.60px;top:267.60px;width:62.40px;height:52.10px;background:#141414;border-radius:2.8px;opacity:0.95"></div><div class="r" style="left:795.60px;top:268.60px;width:60.40px;height:50.10px;background:#3e3e3e;border-radius:2px;"></div><div class="r" style="left:795.60px;top:268.60px;width:60.40px;height:8.30px;background:#2a9363;border-radius:2px;border-bottom-left-radius:0;border-bottom-right-radius:0"></div><svg class="r" style="left:798.60px;top:271.25px" width="4" height="3"><path d="M0.3 0.3 L3.3 0.3 L1.8 2.6Z" fill="#e8e8e8"/></svg><div class="t" style="left:805.60px;top:268.75px;font-size:5.90px;color:rgba(255,255,255,0.82);transform:scaleX(0.8220);transform-origin:0 50%;-webkit-text-stroke:0;">Mix Shader</div><div class="t" style="right:331.80px;top:279.20px;font-size:6.02px;color:#eeeeee;text-align:right;transform:scaleX(0.8220);transform-origin:100% 50%;">Shader</div><div class="s" style="left:854.15px;top:281.35px;width:3.70px;height:3.70px;background:#6ccf6c;"></div><div class="t" style="left:802.50px;top:290.10px;font-size:6.02px;color:#eeeeee;transform:scaleX(0.8220);transform-origin:0 50%;">Fac</div><div class="s" style="left:793.75px;top:292.25px;width:3.70px;height:3.70px;background:#c0c0c0;"></div><div class="t" style="left:802.50px;top:299.30px;font-size:6.02px;color:#eeeeee;transform:scaleX(0.8220);transform-origin:0 50%;">Shader</div><div class="s" style="left:793.75px;top:301.45px;width:3.70px;height:3.70px;background:#6ccf6c;"></div><div class="t" style="left:802.50px;top:308.80px;font-size:6.02px;color:#eeeeee;transform:scaleX(0.8220);transform-origin:0 50%;">Shader</div><div class="s" style="left:793.75px;top:310.95px;width:3.70px;height:3.70px;background:#6ccf6c;"></div><div class="r" style="left:893.50px;top:101.20px;width:62.50px;height:53.30px;background:#141414;border-radius:2.8px;opacity:0.95"></div><div class="r" style="left:894.50px;top:102.20px;width:60.50px;height:51.30px;background:#3e3e3e;border-radius:2px;"></div><div class="r" style="left:894.50px;top:102.20px;width:60.50px;height:8.60px;background:#b9374b;border-radius:2px;border-bottom-left-radius:0;border-bottom-right-radius:0"></div><svg class="r" style="left:897.50px;top:105.00px" width="4" height="3"><path d="M0.3 0.3 L3.3 0.3 L1.8 2.6Z" fill="#e8e8e8"/></svg><div class="t" style="left:904.50px;top:102.50px;font-size:5.90px;color:rgba(255,255,255,0.82);transform:scaleX(0.8220);transform-origin:0 50%;-webkit-text-stroke:0;">Layer Weight</div><div class="t" style="right:232.80px;top:113.40px;font-size:6.02px;color:#eeeeee;text-align:right;transform:scaleX(0.8220);transform-origin:100% 50%;">Fresnel</div><div class="s" style="left:953.15px;top:115.55px;width:3.70px;height:3.70px;background:#c0c0c0;"></div><div class="t" style="right:232.80px;top:123.00px;font-size:6.02px;color:#eeeeee;text-align:right;transform:scaleX(0.8220);transform-origin:100% 50%;">Facing</div><div class="s" style="left:953.15px;top:125.15px;width:3.70px;height:3.70px;background:#c0c0c0;"></div><div class="s" style="left:892.65px;top:135.65px;width:3.70px;height:3.70px;background:#c0c0c0;"></div><div class="r" style="left:899.00px;top:133.70px;width:51.00px;height:7.60px;background:#545454;border-radius:1.5px;"></div><div class="t" style="left:905.00px;top:133.50px;font-size:5.90px;color:#eeeeee;transform:scaleX(0.8220);transform-origin:0 50%;">Blend</div><div class="t" style="right:233.50px;top:133.50px;font-size:5.90px;color:#eeeeee;text-align:right;transform:scaleX(0.8220);transform-origin:100% 50%;">0.100</div><div class="t" style="left:901.00px;top:143.40px;font-size:6.02px;color:#eeeeee;transform:scaleX(0.8220);transform-origin:0 50%;">Normal</div><div class="s" style="left:892.65px;top:145.55px;width:3.70px;height:3.70px;background:#857ed0;"></div><div class="r" style="left:1007.90px;top:115.60px;width:62.50px;height:53.40px;background:#141414;border-radius:2.8px;opacity:0.95"></div><div class="r" style="left:1008.90px;top:116.60px;width:60.50px;height:51.40px;background:#3e3e3e;border-radius:2px;"></div><div class="r" style="left:1008.90px;top:116.60px;width:60.50px;height:8.40px;background:#2a9363;border-radius:2px;border-bottom-left-radius:0;border-bottom-right-radius:0"></div><svg class="r" style="left:1011.90px;top:119.30px" width="4" height="3"><path d="M0.3 0.3 L3.3 0.3 L1.8 2.6Z" fill="#e8e8e8"/></svg><div class="t" style="left:1018.90px;top:116.80px;font-size:5.90px;color:rgba(255,255,255,0.82);transform:scaleX(0.8220);transform-origin:0 50%;-webkit-text-stroke:0;">Mix Shader</div><div class="t" style="right:118.40px;top:127.40px;font-size:6.02px;color:#eeeeee;text-align:right;transform:scaleX(0.8220);transform-origin:100% 50%;">Shader</div><div class="s" style="left:1067.55px;top:129.55px;width:3.70px;height:3.70px;background:#6ccf6c;"></div><div class="s" style="left:1007.05px;top:140.15px;width:3.70px;height:3.70px;background:#c0c0c0;"></div><div class="r" style="left:1013.00px;top:138.20px;width:51.30px;height:7.60px;background:#545454;border-radius:1.5px;"></div><div class="r" style="left:1013.00px;top:138.20px;width:46.17px;height:7.60px;background:#4a79bd;border-radius:1.5px;border-top-right-radius:0;border-bottom-right-radius:0"></div><div class="t" style="left:1015.90px;top:138.00px;font-size:5.90px;color:#eeeeee;transform:scaleX(0.8220);transform-origin:0 50%;">Fac</div><div class="t" style="right:119.20px;top:138.00px;font-size:5.90px;color:#eeeeee;text-align:right;transform:scaleX(0.8220);transform-origin:100% 50%;">0.900</div><div class="t" style="left:1016.00px;top:148.00px;font-size:6.02px;color:#eeeeee;transform:scaleX(0.8220);transform-origin:0 50%;">Shader</div><div class="s" style="left:1007.05px;top:150.15px;width:3.70px;height:3.70px;background:#6ccf6c;"></div><div class="t" style="left:1016.00px;top:157.60px;font-size:6.02px;color:#eeeeee;transform:scaleX(0.8220);transform-origin:0 50%;">Shader</div><div class="s" style="left:1007.05px;top:159.75px;width:3.70px;height:3.70px;background:#6ccf6c;"></div><div class="r" style="left:1106.60px;top:112.00px;width:62.40px;height:53.00px;background:#141414;border-radius:2.8px;opacity:0.95"></div><div class="r" style="left:1107.60px;top:113.00px;width:60.40px;height:51.00px;background:#3e3e3e;border-radius:2px;"></div><div class="r" style="left:1107.60px;top:113.00px;width:60.40px;height:8.80px;background:#b9374b;border-radius:2px;border-bottom-left-radius:0;border-bottom-right-radius:0"></div><svg class="r" style="left:1110.60px;top:115.90px" width="4" height="3"><path d="M0.3 0.3 L3.3 0.3 L1.8 2.6Z" fill="#e8e8e8"/></svg><div class="t" style="left:1117.60px;top:113.40px;font-size:5.90px;color:rgba(255,255,255,0.82);transform:scaleX(0.8220);transform-origin:0 50%;-webkit-text-stroke:0;">Material Output</div><div class="r" style="left:1112.30px;top:124.40px;width:51.30px;height:7.40px;background:#282828;border-radius:1.5px;"></div><div class="t" style="left:1114.60px;top:124.10px;font-size:5.90px;color:#eeeeee;transform:scaleX(0.8220);transform-origin:0 50%;">All</div><svg class="r" style="left:1158.60px;top:126.90px" width="3.4" height="2.4"><path d="M0.4 0.4 L1.7 1.8 L3 0.4" stroke="#d0d0d0" stroke-width="0.7" fill="none"/></svg><div class="t" style="left:1114.80px;top:134.20px;font-size:6.02px;color:#eeeeee;transform:scaleX(0.8220);transform-origin:0 50%;">Surface</div><div class="s" style="left:1105.75px;top:136.35px;width:3.70px;height:3.70px;background:#6ccf6c;"></div><div class="t" style="left:1114.80px;top:144.00px;font-size:6.02px;color:#eeeeee;transform:scaleX(0.8220);transform-origin:0 50%;">Volume</div><div class="s" style="left:1105.75px;top:146.15px;width:3.70px;height:3.70px;background:#6ccf6c;"></div><div class="t" style="left:1114.80px;top:153.90px;font-size:6.02px;color:#eeeeee;transform:scaleX(0.8220);transform-origin:0 50%;">Displacement</div><div class="s" style="left:1105.75px;top:156.05px;width:3.70px;height:3.70px;background:#857ed0;"></div>
<div class="r" style="left:0.00px;top:0.00px;width:1180.00px;height:18.50px;background:#222222;border-radius:0px;"></div><svg class="r" style="left:5px;top:3.5px" width="14" height="12" viewBox="0 0 14 12"><circle cx="8.6" cy="6.6" r="3.4" fill="#222" stroke="#ececec" stroke-width="1.5"/><circle cx="8.6" cy="6.6" r="1.15" fill="#ececec"/><path d="M2.6 2.6 L8.2 2.6" stroke="#ececec" stroke-width="1.5" stroke-linecap="round"/><path d="M1.6 8.4 L5.6 5.6" stroke="#ececec" stroke-width="1.5" stroke-linecap="round"/><path d="M3.5 4.9 L6.0 4.9" stroke="#ececec" stroke-width="1.2"/></svg><div class="t" style="left:23.70px;top:3.20px;line-height:12px;height:12px;font-size:9.07px;color:#e4e4e4;transform:scaleX(0.8929);transform-origin:0 50%;">File</div><div class="t" style="left:45.80px;top:3.20px;line-height:12px;height:12px;font-size:9.07px;color:#e4e4e4;transform:scaleX(0.8929);transform-origin:0 50%;">Edit</div><div class="t" style="left:70.00px;top:3.20px;line-height:12px;height:12px;font-size:9.07px;color:#e4e4e4;transform:scaleX(0.8929);transform-origin:0 50%;">Render</div><div class="t" style="left:106.30px;top:3.20px;line-height:12px;height:12px;font-size:9.07px;color:#e4e4e4;transform:scaleX(0.8929);transform-origin:0 50%;">Window</div><div class="t" style="left:145.20px;top:3.20px;line-height:12px;height:12px;font-size:9.07px;color:#e4e4e4;transform:scaleX(0.8929);transform-origin:0 50%;">Help</div><div class="r" style="left:178.50px;top:2.80px;width:83.70px;height:13.00px;background:#535353;border-radius:3px;"></div><svg class="r" style="left:181.5px;top:4.5px" width="11" height="9" viewBox="0 0 11 9"><rect x="1.5" y="0.8" width="8.5" height="6" fill="none" stroke="#dcdcdc" stroke-width="0.9" rx="0.6"/><path d="M3 3.8 L6.5 3.8 M4.3 2.5 L3 3.8 L4.3 5.1 M5.7 6.8 L5.7 8.5 M3.5 8.5 L8 8.5" stroke="#dcdcdc" stroke-width="0.9" fill="none"/></svg><div class="t" style="left:196.50px;top:3.20px;line-height:12px;height:12px;font-size:9.07px;color:#e4e4e4;transform:scaleX(0.8929);transform-origin:0 50%;">Back to Previous</div><div class="r" style="left:906.70px;top:3.00px;width:21.60px;height:12.30px;background:#2b2b2b;border-radius:3px;border-top-right-radius:0;border-bottom-right-radius:0"></div><svg class="r" style="left:909.5px;top:4px" width="12" height="11" viewBox="0 0 12 11"><path d="M2.6 1.2 L5.2 7.2 A2.6 2.6 0 1 1 0.2 7.2 Z" fill="#e0e0e0"/><circle cx="7.6" cy="2.1" r="1.3" fill="#e0e0e0"/><circle cx="6.5" cy="8.2" r="2" fill="#1f1f1f" stroke="#e0e0e0" stroke-width="0.9"/></svg><svg class="r" style="left:922.50px;top:7.70px" width="4" height="3"><path d="M0.5 0.6 L2.00 2.3 L3.50 0.6" stroke="#cfcfcf" stroke-width="0.9" fill="none"/></svg><div class="r" style="left:929.00px;top:3.00px;width:82.00px;height:12.30px;background:#1d1d1d;border-radius:0px;"></div><div class="t" style="left:933.40px;top:3.30px;line-height:12px;height:12px;font-size:9.07px;color:#e4e4e4;transform:scaleX(0.8929);transform-origin:0 50%;">Scene</div><div class="r" style="left:1011.00px;top:3.00px;width:14.00px;height:12.30px;background:#4a4a4a;border-radius:0px;"></div><div class="r" style="left:1025.00px;top:3.00px;width:13.50px;height:12.30px;background:#2e2e2e;border-radius:3px;border-top-left-radius:0;border-bottom-left-radius:0"></div><svg class="r" style="left:1012px;top:4px" width="12" height="11" viewBox="0 0 12 11"><path d="M3.6 3.2 L3.6 0.7 L8.6 0.7 L10.8 2.9 L10.8 7.8 L8.2 7.8" fill="none" stroke="#d8d8d8" stroke-width="0.9"/><path d="M0.7 3.2 L5.8 3.2 L8 5.4 L8 10.3 L0.7 10.3 Z" fill="none" stroke="#d8d8d8" stroke-width="0.9"/></svg><svg class="r" style="left:1028px;top:6px" width="7" height="7" viewBox="0 0 7 7"><path d="M1 1 L6 6 M6 1 L1 6" stroke="#6a6a6a" stroke-width="0.9"/></svg><div class="r" style="left:1042.70px;top:3.00px;width:20.90px;height:12.30px;background:#2b2b2b;border-radius:3px;border-top-right-radius:0;border-bottom-right-radius:0"></div><svg class="r" style="left:1045px;top:4.5px" width="10" height="9" viewBox="0 0 10 9"><rect x="2.5" y="0.6" width="7" height="6" fill="none" stroke="#dcdcdc" stroke-width="0.8"/><rect x="0.5" y="2.6" width="7" height="6" fill="#9a9a9a" stroke="#dcdcdc" stroke-width="0.8"/><path d="M1.5 8 L3.8 5 L6.5 8Z" fill="#1f1f1f"/></svg><svg class="r" style="left:1057.00px;top:7.70px" width="4" height="3"><path d="M0.5 0.6 L2.00 2.3 L3.50 0.6" stroke="#cfcfcf" stroke-width="0.9" fill="none"/></svg><div class="r" style="left:1064.30px;top:3.00px;width:82.70px;height:12.30px;background:#1d1d1d;border-radius:0px;"></div><div class="t" style="left:1069.40px;top:3.30px;line-height:12px;height:12px;font-size:9.07px;color:#e4e4e4;transform:scaleX(0.8929);transform-origin:0 50%;">View Layer</div><div class="r" style="left:1147.00px;top:3.00px;width:13.40px;height:12.30px;background:#4a4a4a;border-radius:0px;"></div><div class="r" style="left:1160.40px;top:3.00px;width:13.30px;height:12.30px;background:#2e2e2e;border-radius:3px;border-top-left-radius:0;border-bottom-left-radius:0"></div><svg class="r" style="left:1148px;top:4px" width="12" height="11" viewBox="0 0 12 11"><path d="M3.6 3.2 L3.6 0.7 L8.6 0.7 L10.8 2.9 L10.8 7.8 L8.2 7.8" fill="none" stroke="#d8d8d8" stroke-width="0.9"/><path d="M0.7 3.2 L5.8 3.2 L8 5.4 L8 10.3 L0.7 10.3 Z" fill="none" stroke="#d8d8d8" stroke-width="0.9"/></svg><svg class="r" style="left:1163.5px;top:6px" width="7" height="7" viewBox="0 0 7 7"><path d="M1 1 L6 6 M6 1 L1 6" stroke="#6a6a6a" stroke-width="0.9"/></svg><div class="r" style="left:0.00px;top:18.60px;width:1180.00px;height:17.40px;background:linear-gradient(#333333,#2e2e2e);border-radius:0px;border-top-left-radius:3px"></div><div class="t" style="left:101.30px;top:22.10px;line-height:12px;height:12px;font-size:9.07px;color:#e4e4e4;transform:scaleX(0.8929);transform-origin:0 50%;">View</div><div class="t" style="left:128.90px;top:22.10px;line-height:12px;height:12px;font-size:9.07px;color:#e4e4e4;transform:scaleX(0.8929);transform-origin:0 50%;">Select</div><div class="t" style="left:161.80px;top:22.10px;line-height:12px;height:12px;font-size:9.07px;color:#e4e4e4;transform:scaleX(0.8929);transform-origin:0 50%;">Add</div><div class="t" style="left:186.30px;top:22.10px;line-height:12px;height:12px;font-size:9.07px;color:#e4e4e4;transform:scaleX(0.8929);transform-origin:0 50%;">Node</div><div class="t" style="left:231.40px;top:22.10px;line-height:12px;height:12px;font-size:9.07px;color:#e4e4e4;transform:scaleX(0.8929);transform-origin:0 50%;">Use Nodes</div><svg class="r" style="left:8px;top:22px" width="11" height="11" viewBox="0 0 11 11"><circle cx="5.5" cy="5.6" r="4.4" fill="#262626" stroke="#e0e0e0" stroke-width="1.2"/><path d="M2.9 4.6 A2.8 2.8 0 0 1 4.6 2.9" stroke="#e8e8e8" stroke-width="1.3" fill="none"/></svg><svg class="r" style="left:20.80px;top:26.80px" width="4" height="3"><path d="M0.5 0.6 L2.00 2.3 L3.50 0.6" stroke="#cfcfcf" stroke-width="0.9" fill="none"/></svg><div class="r" style="left:33.20px;top:22.50px;width:59.30px;height:11.50px;background:#282828;border-radius:3px;"></div><svg class="r" style="left:34px;top:23px" width="10" height="10" viewBox="0 0 10 10"><rect x="2.5" y="2.5" width="5" height="5" fill="#e6e6e6"/><path d="M0.5 2.5 L0.5 0.5 L2.5 0.5 M7.5 0.5 L9.5 0.5 L9.5 2.5 M9.5 7.5 L9.5 9.5 L7.5 9.5 M2.5 9.5 L0.5 9.5 L0.5 7.5" stroke="#9a9a9a" stroke-width="0.8" fill="none"/></svg><svg class="r" style="left:86.50px;top:26.80px" width="4" height="3"><path d="M0.5 0.6 L2.00 2.3 L3.50 0.6" stroke="#cfcfcf" stroke-width="0.9" fill="none"/></svg><div class="t" style="left:48.60px;top:22.10px;line-height:12px;height:12px;font-size:9.07px;color:#e4e4e4;transform:scaleX(0.8929);transform-origin:0 50%;">Object</div><div class="r" style="left:216.30px;top:23.80px;width:9.50px;height:8.80px;background:#5279bb;border-radius:2px;"></div><svg class="r" style="left:217.5px;top:24.5px" width="8" height="8" viewBox="0 0 8 8"><path d="M1.2 4 L3.2 6 L6.8 1.6" stroke="#e8eeff" stroke-width="1.1" fill="none"/></svg><div class="r" style="left:466.00px;top:22.80px;width:51.60px;height:11.70px;background:#282828;border-radius:3px;"></div><div class="t" style="left:468.80px;top:22.40px;line-height:12px;height:12px;font-size:9.07px;color:#e4e4e4;transform:scaleX(0.8929);transform-origin:0 50%;">Slot 1</div><svg class="r" style="left:511.00px;top:27.10px" width="4" height="3"><path d="M0.5 0.6 L2.00 2.3 L3.50 0.6" stroke="#cfcfcf" stroke-width="0.9" fill="none"/></svg><div class="r" style="left:523.00px;top:22.80px;width:21.30px;height:11.70px;background:#303030;border-radius:3px;"></div><svg class="r" style="left:524.5px;top:23.3px" width="11" height="11" viewBox="0 0 11 11"><circle cx="5.5" cy="5.5" r="4.6" fill="#e8e8e8"/><path d="M5.5 0.9 A4.6 4.6 0 0 0 0.9 5.5 L5.5 5.5 Z M5.5 5.5 L10.1 5.5 A4.6 4.6 0 0 1 5.5 10.1 Z" fill="#202020"/></svg><svg class="r" style="left:537.00px;top:27.10px" width="4" height="3"><path d="M0.5 0.6 L2.00 2.3 L3.50 0.6" stroke="#cfcfcf" stroke-width="0.9" fill="none"/></svg><div class="r" style="left:544.30px;top:22.80px;width:82.00px;height:11.70px;background:#1d1d1d;border-radius:0px;"></div><div class="t" style="left:549.40px;top:22.40px;line-height:12px;height:12px;font-size:9.07px;color:#e4e4e4;transform:scaleX(0.8929);transform-origin:0 50%;">1</div><div class="r" style="left:626.30px;top:22.80px;width:57.70px;height:11.70px;background:#4a4a4a;border-radius:3px;border-top-left-radius:0;border-bottom-left-radius:0"></div><div class="t" style="left:632.70px;top:22.40px;line-height:12px;height:12px;font-size:9.07px;color:#e4e4e4;transform:scaleX(0.8929);transform-origin:0 50%;">2</div><svg class="r" style="left:644px;top:23.8px" width="11" height="10" viewBox="0 0 11 10"><path d="M5.5 0.8 L9.5 2 L9.5 5 C9.5 7.2 7.5 8.6 5.5 9.3 C3.5 8.6 1.5 7.2 1.5 5 L1.5 2 Z" fill="none" stroke="#bdbdbd" stroke-width="0.9"/></svg><svg class="r" style="left:659px;top:24px" width="11" height="10" viewBox="0 0 11 10"><path d="M1 3 L1 9.3 L7 9.3 L7 3 Z M3.5 3 L3.5 0.7 L7.8 0.7 L10 2.8 L10 7 L7 7" fill="none" stroke="#dcdcdc" stroke-width="0.9"/></svg><svg class="r" style="left:674px;top:25px" width="8" height="8" viewBox="0 0 8 8"><path d="M1 1 L7 7 M7 1 L1 7" stroke="#dcdcdc" stroke-width="0.9"/></svg><svg class="r" style="left:689.5px;top:23.5px" width="12" height="11" viewBox="0 0 12 11"><path d="M7 1 L11 5 L9.5 5.5 L7.5 7.5 L7.5 9 L3 4.5 L4.5 4.5 L6.5 2.5 Z M4.8 6.2 L1 10" fill="none" stroke="#a0a0a0" stroke-width="0.9"/></svg><div class="r" style="left:1122.00px;top:21.40px;width:12.80px;height:12.70px;background:#393939;border-radius:2.5px;"></div><svg class="r" style="left:1123.5px;top:22.5px" width="10" height="11" viewBox="0 0 10 11"><path d="M4.3 9.6 L4.3 2 M2.2 4.1 L4.3 1.8 L6.4 4.1 M4.3 9.6 L8.4 9.6" stroke="#8a8a8a" stroke-width="0.9" fill="none"/></svg><div class="r" style="left:1139.00px;top:21.40px;width:12.80px;height:12.70px;background:#565656;border-radius:0.5px;"></div><svg class="r" style="left:1140px;top:22.5px" width="11" height="11" viewBox="0 0 11 11"><path d="M4.2 9.3 L6.6 6.8 C8.2 5.2 8 3 6.6 1.9 C5.2 0.8 3.2 1.2 2.2 2.8 L1.6 3.8 L3.3 4.9 L4 4 C4.6 3.2 5.4 3.2 5.8 3.7 C6.2 4.2 6 5 5.3 5.6 L2.8 8.2 Z" fill="none" stroke="#b0b0b0" stroke-width="0.8"/></svg><div class="r" style="left:1152.50px;top:21.40px;width:22.00px;height:12.70px;background:#2c2c2c;border-radius:2.5px;"></div><svg class="r" style="left:1153.5px;top:22.5px" width="12" height="12" viewBox="0 0 12 12"><rect x="1.8" y="1.2" width="3.4" height="3" fill="#ffffff"/><path d="M4.5 5 L4.5 11.5 M8.8 0.5 L8.8 11.5 M0.5 3.2 L11.5 3.2 M0.5 7.1 L11.5 7.1" stroke="#dcdcdc" stroke-width="0.8"/></svg><svg class="r" style="left:1167.40px;top:26.70px" width="4" height="3"><path d="M0.5 0.6 L2.00 2.3 L3.50 0.6" stroke="#cfcfcf" stroke-width="0.9" fill="none"/></svg>
<div class="r" style="left:0.00px;top:620.50px;width:1180.00px;height:14.50px;background:#2c2c2c;border-radius:0px;"></div><svg class="r" style="left:8.10px;top:624.00px" width="8" height="10" viewBox="0 0 8 10"><rect x="0.5" y="0.5" width="7" height="9" rx="1.6" fill="none" stroke="#c8c8c8" stroke-width="0.8"/><path d="M0.9 4.2 L0.9 1.6 Q0.9 0.9 1.6 0.9 L3.8 0.9 L3.8 4.2 Z" fill="#d8d8d8"/><path d="M3.8 1 L3.8 9" stroke="#9a9a9a" stroke-width="0.6"/></svg><div class="t" style="left:23.50px;top:622.30px;line-height:12px;height:12px;font-size:8.96px;color:#cfcfcf;transform:scaleX(0.8929);transform-origin:0 50%;">Select</div><svg class="r" style="left:53.00px;top:624.00px" width="8" height="10" viewBox="0 0 8 10"><rect x="0.5" y="0.5" width="7" height="9" rx="1.6" fill="none" stroke="#c8c8c8" stroke-width="0.8"/><path d="M0.9 4.2 L0.9 1.6 Q0.9 0.9 1.6 0.9 L3.8 0.9 L3.8 4.2 Z" fill="#d8d8d8"/><path d="M3.8 1 L3.8 9" stroke="#9a9a9a" stroke-width="0.6"/></svg><svg class="r" style="left:61.5px;top:624.5px" width="4" height="5"><path d="M0.3 0.3 L3.3 2.2 L0.3 4.3Z" fill="#9a9a9a"/></svg><div class="t" style="left:70.00px;top:622.30px;line-height:12px;height:12px;font-size:8.96px;color:#cfcfcf;transform:scaleX(0.8929);transform-origin:0 50%;">Box Select</div><svg class="r" style="left:186.00px;top:624.00px" width="8" height="10" viewBox="0 0 8 10"><rect x="0.5" y="0.5" width="7" height="9" rx="1.6" fill="none" stroke="#c8c8c8" stroke-width="0.8"/><path d="M3.9 1 L3.9 4.5" stroke="#c8c8c8" stroke-width="0.8"/></svg><div class="t" style="left:201.50px;top:622.30px;line-height:12px;height:12px;font-size:8.96px;color:#cfcfcf;transform:scaleX(0.8929);transform-origin:0 50%;">Pan View</div><svg class="r" style="left:365.00px;top:624.00px" width="8" height="10" viewBox="0 0 8 10"><rect x="0.5" y="0.5" width="7" height="9" rx="1.6" fill="none" stroke="#c8c8c8" stroke-width="0.8"/><path d="M4.2 0.9 L6.4 0.9 Q7.1 0.9 7.1 1.6 L7.1 4.2 L4.2 4.2 Z" fill="#d8d8d8"/></svg><div class="t" style="left:380.00px;top:622.30px;line-height:12px;height:12px;font-size:8.96px;color:#cfcfcf;transform:scaleX(0.8929);transform-origin:0 50%;">Node Context Menu</div><div class="t" style="left:748.50px;top:622.30px;line-height:12px;height:12px;font-size:9.18px;color:#c8c8c8;transform:scaleX(0.8929);transform-origin:0 50%;">Collection | default001.001 | Verts:86,145 | Faces:171,152 | Tris:171,163 | Objects:1/5 | Mem: 196.4 MiB | v2.82.7</div><div class="t" style="left:20.60px;top:590.50px;line-height:12px;height:12px;font-size:9.18px;color:#f4f4f4;transform:scaleX(0.8929);transform-origin:0 50%;font-weight:bold;">1</div><svg class="r" style="left:0.7px;top:48.6px" width="4" height="6"><path d="M0.6 0.6 L3 3 L0.6 5.4" stroke="#b0b0b0" stroke-width="1" fill="none"/></svg><svg class="r" style="left:1175.3px;top:48.8px" width="4" height="6"><path d="M3 0.6 L0.6 3 L3 5.4" stroke="#bbb" stroke-width="0.8" fill="none"/></svg>
</body></html>
